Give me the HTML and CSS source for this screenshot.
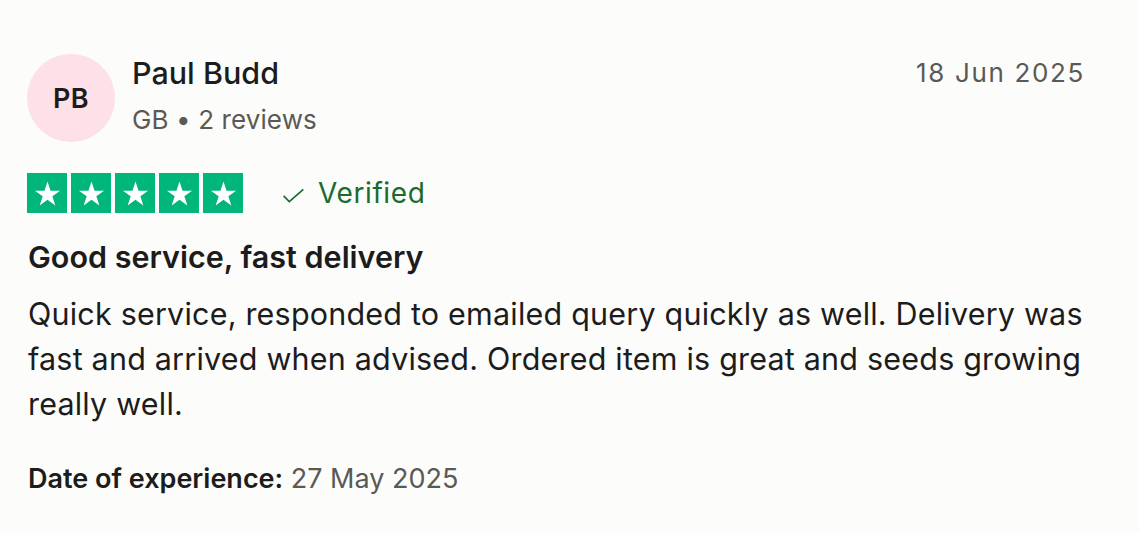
FILE: index.html
```html
<!DOCTYPE html>
<html lang="en">
<head>
<meta charset="utf-8">
<title>Review</title>
<link rel="stylesheet" href="styles.css">
</head>
<body>
<article class="review">
  <header class="review-header">
    <div class="avatar">PB</div>
    <div class="consumer">
      <div class="name">Paul Budd</div>
      <div class="meta">GB • 2 reviews</div>
    </div>
    <time class="posted">18 Jun 2025</time>
  </header>
  <div class="rating-row">
    <div class="stars">
      <span class="star"><svg viewBox="0 0 24 24"><path d="M12 2.8l2.35 7.05h7.4l-6 4.35 2.3 7.05L12 16.9l-6.05 4.35 2.3-7.05-6-4.35h7.4z"/></svg></span>
      <span class="star"><svg viewBox="0 0 24 24"><path d="M12 2.8l2.35 7.05h7.4l-6 4.35 2.3 7.05L12 16.9l-6.05 4.35 2.3-7.05-6-4.35h7.4z"/></svg></span>
      <span class="star"><svg viewBox="0 0 24 24"><path d="M12 2.8l2.35 7.05h7.4l-6 4.35 2.3 7.05L12 16.9l-6.05 4.35 2.3-7.05-6-4.35h7.4z"/></svg></span>
      <span class="star"><svg viewBox="0 0 24 24"><path d="M12 2.8l2.35 7.05h7.4l-6 4.35 2.3 7.05L12 16.9l-6.05 4.35 2.3-7.05-6-4.35h7.4z"/></svg></span>
      <span class="star"><svg viewBox="0 0 24 24"><path d="M12 2.8l2.35 7.05h7.4l-6 4.35 2.3 7.05L12 16.9l-6.05 4.35 2.3-7.05-6-4.35h7.4z"/></svg></span>
    </div>
    <div class="verified">
      <svg class="check" viewBox="0 0 24 16"><path d="M1.5 8.5l6 6L22.5 1.5" fill="none" stroke="currentColor" stroke-width="1.8"/></svg>
      <span>Verified</span>
    </div>
  </div>
  <h2 class="title">Good service, fast delivery</h2>
  <p class="body">Quick service, responded to emailed query quickly as well. Delivery was fast and arrived when advised. Ordered item is great and seeds growing really well.</p>
  <p class="experience"><b>Date of experience:</b> <span>27 May 2025</span></p>
</article>
</body>
</html>
```

FILE: styles.css
```css
html, body {
  margin: 0;
  padding: 0;
  background: #fcfcfb;
}
body {
  font-family: Inter, "Liberation Sans", sans-serif;
  color: #1c1c1c;
}
.review {
  padding: 54px 30px 0 28px;
}
.review-header {
  display: flex;
  align-items: flex-start;
}
.avatar {
  width: 88px;
  height: 88px;
  margin-left: -1px;
  border-radius: 50%;
  background: #fde0e8;
  display: flex;
  align-items: center;
  justify-content: center;
  font-size: 27px;
  font-weight: 600;
  letter-spacing: 0.5px;
  flex: none;
}
.consumer {
  margin-left: 17px;
  flex: 1;
  padding-top: 1px;
}
.name {
  font-size: 30.5px;
  font-weight: 500;
  line-height: 36px;
}
.meta {
  font-size: 26px;
  line-height: 36px;
  color: #5a5955;
  margin-top: 11px;
  letter-spacing: 0.1px;
}
.posted {
  font-size: 26px;
  line-height: 36px;
  color: #5a5955;
  margin-right: 24px;
  padding-top: 1px;
  letter-spacing: 1.65px;
}
.rating-row {
  display: flex;
  align-items: center;
  margin-top: 31px;
}
.stars {
  display: flex;
  gap: 4px;
  margin-left: -1px;
}
.star {
  width: 40px;
  height: 40px;
  background: #00b67a;
  display: flex;
  align-items: center;
  justify-content: center;
}
.star svg {
  width: 31px;
  height: 31px;
  fill: #fff;
}
.verified {
  display: flex;
  align-items: center;
  margin-left: 39px;
  color: #1a6b2c;
  font-size: 28px;
  letter-spacing: 0.6px;
}
.check {
  width: 23px;
  height: 15px;
  margin-right: 13px;
  margin-top: 4px;
}
.title {
  margin: 26px 0 0;
  font-size: 30.5px;
  font-weight: 600;
  line-height: 36px;
}
.body {
  margin: 16px 0 0;
  font-size: 30.5px;
  line-height: 45px;
  letter-spacing: 0.2px;
}
.experience {
  margin: 35px 0 0;
  font-size: 27px;
  line-height: 36px;
}
.experience b {
  font-weight: 600;
}
.experience span {
  color: #5a5955;
}
```
